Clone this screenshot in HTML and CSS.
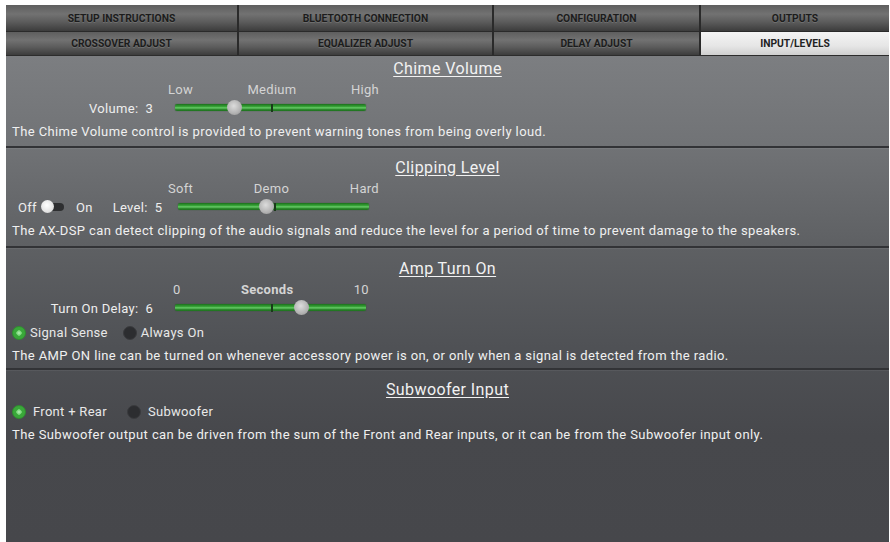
FILE: index.html
```html
<!DOCTYPE html>
<html lang="en">
<head>
  <meta charset="UTF-8">
  <title>Input / Levels</title>
  <link rel="stylesheet" href="styles.css">
</head>
<body>
  <div class="screen">

    <!-- tab bar, two rows -->
    <div class="tabs">
      <div class="tab">Setup Instructions</div>
      <div class="tab">Bluetooth Connection</div>
      <div class="tab">Configuration</div>
      <div class="tab">Outputs</div>
      <div class="tab">Crossover Adjust</div>
      <div class="tab">Equalizer Adjust</div>
      <div class="tab">Delay Adjust</div>
      <div class="tab active">Input/Levels</div>
    </div>

    <div class="content">

      <!-- Chime Volume -->
      <div class="section sec-chime">
        <div class="sec-title"><span>Chime Volume</span></div>
        <div class="scale">
          <span>Low</span><span>Medium</span><span>High</span>
        </div>
        <div class="ctl-row">
          <div class="ctl-left">Volume:&nbsp; 3</div>
          <div class="slider">
            <div class="track"></div>
            <div class="tick"></div>
            <div class="thumb" style="left: 31%"></div>
          </div>
        </div>
        <p class="desc">The Chime Volume control is provided to prevent warning tones from being overly loud.</p>
      </div>

      <!-- Clipping Level -->
      <div class="section sec-clip">
        <div class="sec-title"><span>Clipping Level</span></div>
        <div class="scale">
          <span>Soft</span><span>Demo</span><span>Hard</span>
        </div>
        <div class="ctl-row">
          <div class="ctl-left switch-left">
            <span>Off</span>
            <span class="switch"><span class="knob"></span></span>
            <span>On</span>
            <span class="lvl">Level:&nbsp; 5</span>
          </div>
          <div class="slider">
            <div class="track"></div>
            <div class="tick"></div>
            <div class="thumb" style="left: 46%"></div>
          </div>
        </div>
        <p class="desc">The AX-DSP can detect clipping of the audio signals and reduce the level for a period of time to prevent damage to the speakers.</p>
      </div>

      <!-- Amp Turn On -->
      <div class="section sec-amp">
        <div class="sec-title"><span>Amp Turn On</span></div>
        <div class="scale scale-sec">
          <span>0</span><span class="bold">Seconds</span><span>10</span>
        </div>
        <div class="ctl-row">
          <div class="ctl-left">Turn On Delay:&nbsp; 6</div>
          <div class="slider">
            <div class="track"></div>
            <div class="tick"></div>
            <div class="thumb" style="left: 66%"></div>
          </div>
        </div>
        <div class="radios">
          <label class="radio checked"><span class="dot"></span>Signal Sense</label>
          <label class="radio"><span class="dot"></span>Always On</label>
        </div>
        <p class="desc">The AMP ON line can be turned on whenever accessory power is on, or only when a signal is detected from the radio.</p>
      </div>

      <!-- Subwoofer Input -->
      <div class="section sec-sub">
        <div class="sec-title"><span>Subwoofer Input</span></div>
        <div class="radios radios-sub">
          <label class="radio checked"><span class="dot"></span>Front + Rear</label>
          <label class="radio"><span class="dot"></span>Subwoofer</label>
        </div>
        <p class="desc">The Subwoofer output can be driven from the sum of the Front and Rear inputs, or it can be from the Subwoofer input only.</p>
      </div>

    </div>
  </div>
</body>
</html>
```

FILE: styles.css
```css
html, body {
  margin: 0;
  padding: 0;
  background-color: #fff;
}
body {
  font-family: 'Roboto', 'Liberation Sans', sans-serif;
  color: #eee;
}
.screen {
  margin: 5px 1px 0 6px;
  height: 537px;
  display: flex;
  flex-direction: column;
  background-color: #46474b;
  overflow: hidden;
}

/* tabs */
.tabs {
  display: grid;
  grid-template-columns: 231px 253px 205px 1fr;
  grid-template-rows: 26px 23px;
  background-color: #2a2a2a;
  gap: 1px 2px;
  border-bottom: 1px solid #2c2c2c;
}
.tab {
  display: flex;
  align-items: center;
  justify-content: center;
  text-transform: uppercase;
  font-size: 10.3px;
  font-weight: bold;
  color: #1c1c1c;
  text-shadow: 0 1px 0 rgba(255, 255, 255, 0.15);
  background: linear-gradient(#5e5e5e, #727272 35%, #5c5c5c 65%, #3c3c3c);
}
.tab.active {
  background: linear-gradient(#f4f4f4, #e6e6e6 60%, #cfcfcf);
  color: #222;
}

/* content area */
.content {
  flex: 1;
  display: flex;
  flex-direction: column;
  background: linear-gradient(#7c7e81, #717376 18%, #5f6164 38%, #4f5155 60%, #47484c 78%, #46474b);
}
.section {
  padding: 7px 6px 0;
  border-bottom: 2px solid #323336;
  box-shadow: 0 1px 0 rgba(255, 255, 255, 0.06);
}
.sec-chime { height: 90px; padding-top: 0; }
.sec-clip { height: 91px; }
.sec-amp { height: 112px; padding-top: 8px; }
.sec-sub { flex: 1; border-bottom: none; box-shadow: none; }

.sec-title {
  text-align: center;
  font-size: 16px;
  letter-spacing: 0.4px;
  line-height: 18px;
  padding-top: 4px;
  color: #f2f2f2;
}
.sec-title span {
  text-decoration: underline;
  text-underline-offset: 2px;
}

/* labels above a slider */
.scale {
  display: flex;
  justify-content: space-between;
  width: 211px;
  margin: 5px 0 0 156px;
  font-size: 13px;
  letter-spacing: 0.3px;
  line-height: 14px;
  color: #d4d4d4;
}
.scale-sec {
  width: 196px;
  margin-left: 161px;
}
.bold {
  font-weight: bold;
}

.ctl-row {
  display: flex;
  align-items: center;
  height: 18px;
  margin-top: 2px;
  font-size: 13px;
  letter-spacing: 0.3px;
}
.ctl-left {
  width: 141px;
  padding-right: 17px;
  text-align: right;
}
.switch-left {
  display: flex;
  align-items: center;
  width: 152px;
  padding: 0 3px 0 6px;
  text-align: left;
}
.switch {
  position: relative;
  width: 21px;
  height: 8px;
  margin: 0 12px 0 6px;
  border-radius: 4px;
  background-color: #2e2f31;
}
.knob {
  position: absolute;
  left: -2px;
  top: -3px;
  width: 13px;
  height: 13px;
  border-radius: 50%;
  background: radial-gradient(circle at 45% 40%, #fff, #e4e4e4 60%, #bdbdbd);
}
.lvl {
  margin-left: 20px;
}

/* green slider */
.slider {
  position: relative;
  width: 191px;
  height: 18px;
  margin-left: 5px;
}
.track {
  position: absolute;
  left: 0;
  right: 0;
  top: 5px;
  height: 7px;
  border-radius: 2px;
  background: linear-gradient(#1c6e1c, #3aa83a 40%, #6ccc6c 55%, #2f8f2f 75%, #1c6e1c);
  box-shadow: 0 0 1px #174f17;
}
.tick {
  position: absolute;
  left: 50%;
  top: 5px;
  width: 2px;
  height: 8px;
  background-color: #1a3a1a;
}
.thumb {
  position: absolute;
  top: 1px;
  width: 15px;
  height: 15px;
  margin-left: -7px;
  border-radius: 50%;
  background: radial-gradient(circle at 45% 40%, #dcdcdc, #b2b2b2 60%, #8e8e8e);
}

/* radio buttons */
.radios {
  display: flex;
  align-items: center;
  gap: 15px;
  margin-top: 8px;
  font-size: 13px;
  letter-spacing: 0.3px;
  line-height: 16px;
}
.radios-sub {
  margin-top: 5px;
  gap: 20px;
}
.radio {
  display: flex;
  align-items: center;
  gap: 4px;
  color: #e8e8e8;
}
.radios-sub .radio {
  gap: 7px;
}
.dot {
  width: 12px;
  height: 12px;
  border-radius: 50%;
  background-color: #2c2d30;
  border: 1px solid #3a3b3e;
}
.radio.checked .dot {
  background: radial-gradient(circle, #b9f0b9 0, #6dd06d 30%, #3aa83a 35%, #3aa83a 100%);
  border-color: #2f8f2f;
}

.desc {
  margin: 7px 0 0;
  font-size: 13px;
  letter-spacing: 0.4px;
  line-height: 16px;
  color: #f0f0f0;
}
```
